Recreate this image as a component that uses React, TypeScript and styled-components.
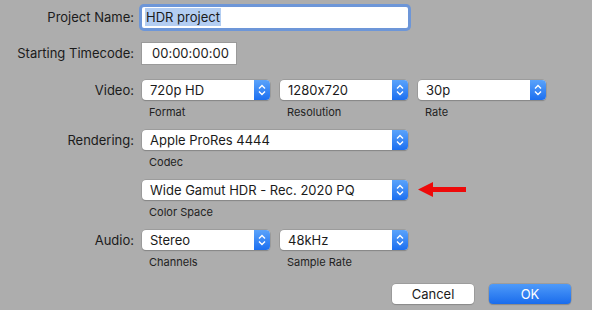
import React from 'react';
import styled, {createGlobalStyle} from 'styled-components';

const GlobalStyle = createGlobalStyle`
  html, body {
    margin: 0;
    padding: 0;
    background: #adadad;
  }
  body {
    font-family: Inter, "Liberation Sans", Arial, sans-serif;
    font-feature-settings: "calt" 0;
    color: #1b1b1b;
  }
`;

const Dialog = styled.div`
  width: 592px;
  height: 310px;
  box-sizing: border-box;
  background: #adadad;
  padding-top: 7px;
  display: flex;
  flex-direction: column;
`;

const Row = styled.div<{ top: number }>`
  display: flex;
  align-items: flex-start;
  margin-top: ${(p) => p.top}px;
`;

const Label = styled.div<{ h: number }>`
  width: 134px;
  text-align: right;
  font-size: 13px;
  line-height: ${(p) => p.h}px;
  margin-right: 8px;
  white-space: nowrap;
`;

const Fields = styled.div`
  display: flex;
  align-items: flex-start;
  gap: 10px;
`;

const Field = styled.div`
  display: flex;
  flex-direction: column;
`;

const TextBox = styled.div<{ w: number; focused?: boolean }>`
  width: ${(p) => p.w}px;
  height: 21px;
  box-sizing: border-box;
  background: #fff;
  font-size: 13px;
  line-height: 21px;
  padding-left: ${(p) => (p.focused ? 3 : 10)}px;
  box-shadow: ${(p) => (p.focused ? '0 0 0 3px #6d96d8' : '0 0 0 1px #9a9a9a')};
  border-radius: ${(p) => (p.focused ? 2 : 0)}px;
`;

const Selected = styled.span`
  background: #b3cdf2;
  padding: 1px 1px;
`;

const Popup = styled.div<{ w: number }>`
  width: ${(p) => p.w}px;
  height: 20px;
  display: flex;
  background: #fff;
  border-radius: 4px;
  box-shadow: 0 0 0 0.5px #8c8c8c, 0 1px 1px rgba(0, 0, 0, 0.25);
  overflow: hidden;
`;

const PopupText = styled.div`
  flex: 1;
  font-size: 13px;
  line-height: 20px;
  padding-left: 8px;
  white-space: nowrap;
`;

const Stepper = styled.div`
  width: 16px;
  height: 20px;
  background: linear-gradient(#5aa3fb, #1c6ff0);
  display: flex;
  align-items: center;
  justify-content: center;
`;

const SubLabel = styled.div`
  font-size: 11px;
  line-height: 14px;
  margin-top: 5px;
  padding-left: 7px;
  color: #222;
`;

const Buttons = styled.div`
  display: flex;
  justify-content: flex-end;
  gap: 15px;
  padding-right: 21px;
  margin-top: 15px;
`;

const Button = styled.div<{ primary?: boolean }>`
  width: 82px;
  height: 20px;
  border-radius: 4px;
  font-size: 13px;
  line-height: 20px;
  text-align: center;
  color: ${(p) => (p.primary ? '#fff' : '#1b1b1b')};
  background: ${(p) => (p.primary ? 'linear-gradient(#4e9af9, #1a6cec)' : '#fff')};
  box-shadow: 0 0 0 0.5px #8c8c8c, 0 1px 1px rgba(0, 0, 0, 0.2);
`;

const Arrow = styled.svg`
  margin-top: 1px;
`;

const Chevrons = () => (
  <svg width="10" height="14" viewBox="0 0 10 14">
    <path d="M2 5.5 L5 2.5 L8 5.5 M2 8.5 L5 11.5 L8 8.5" fill="none" stroke="#fff" strokeWidth="1.4"/>
  </svg>
);

const Select = ({w, value, sub}: { w: number; value: string; sub?: string }) => (
  <Field>
    <Popup w={w}>
      <PopupText>{value}</PopupText>
      <Stepper><Chevrons/></Stepper>
    </Popup>
    {sub && <SubLabel>{sub}</SubLabel>}
  </Field>
);

export default function App() {
  return (
    <Dialog>
      <GlobalStyle/>
      <Row top={0}>
        <Label h={21}>Project Name:</Label>
        <TextBox w={266} focused><Selected>HDR project</Selected></TextBox>
      </Row>
      <Row top={15}>
        <Label h={21}>Starting Timecode:</Label>
        <TextBox w={94}>00:00:00:00</TextBox>
      </Row>
      <Row top={16}>
        <Label h={20}>Video:</Label>
        <Fields>
          <Select w={128} value="720p HD" sub="Format"/>
          <Select w={128} value="1280x720" sub="Resolution"/>
          <Select w={128} value="30p" sub="Rate"/>
        </Fields>
      </Row>
      <Row top={11}>
        <Label h={20}>Rendering:</Label>
        <Select w={266} value="Apple ProRes 4444" sub="Codec"/>
      </Row>
      <Row top={11}>
        <Label h={20}/>
        <Fields>
          <Select w={266} value="Wide Gamut HDR - Rec. 2020 PQ" sub="Color Space"/>
          <Arrow width="48" height="17" viewBox="0 0 48 17">
            <path d="M0 8.5 L15 1 L15 6 L48 6 L48 11 L15 11 L15 16 Z" fill="#ee0a0a"/>
          </Arrow>
        </Fields>
      </Row>
      <Row top={11}>
        <Label h={20}>Audio:</Label>
        <Fields>
          <Select w={128} value="Stereo" sub="Channels"/>
          <Select w={128} value="48kHz" sub="Sample Rate"/>
        </Fields>
      </Row>
      <Buttons>
        <Button>Cancel</Button>
        <Button primary>OK</Button>
      </Buttons>
    </Dialog>
  );
}
